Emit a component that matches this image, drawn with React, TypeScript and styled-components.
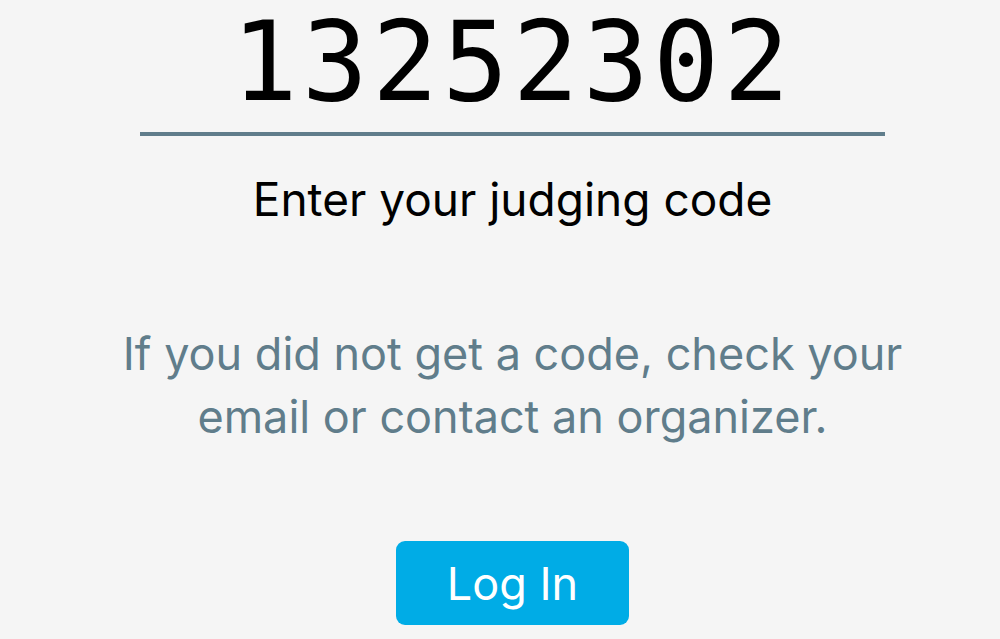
import React from 'react';
import styled, { createGlobalStyle } from 'styled-components';

const GlobalStyle = createGlobalStyle`
    html, body {
        margin: 0;
        padding: 0;
        background-color: #f5f5f5;
    }
    body {
        font-family: Inter, "Noto Sans", sans-serif;
    }
`;

const Page = styled.div`
    display: flex;
    flex-direction: column;
    align-items: center;
    box-sizing: border-box;
    width: 100%;
    min-height: 639px;
    padding-left: 25px;
    overflow: hidden;
`;

const CodeInput = styled.input`
    display: block;
    width: 745px;
    height: 136px;
    margin: 0;
    padding: 0 0 8px 0;
    border: none;
    border-bottom: 4px solid #607d8b;
    background: transparent;
    outline: none;
    box-sizing: border-box;
    text-align: center;
    font-family: "DejaVu Sans Mono", "Liberation Mono", monospace;
    font-size: 110px;
    line-height: 128px;
    letter-spacing: 4px;
    color: #000;
`;

const Label = styled.div`
    margin-top: 36px;
    font-size: 46px;
    line-height: 55px;
    color: #000;
`;

const Hint = styled.p`
    margin: 95px 0 0 0;
    max-width: 820px;
    text-align: center;
    font-size: 45px;
    line-height: 63px;
    color: #607d8b;
`;

const LoginButton = styled.button`
    margin-top: 93px;
    width: 233px;
    height: 84px;
    border: none;
    border-radius: 9px;
    background-color: #00ace6;
    color: #fff;
    font-family: Inter, "Noto Sans", sans-serif;
    font-size: 45px;
    cursor: pointer;
`;

const App: React.FC = () => {
    return (
        <React.Fragment>
            <GlobalStyle />
            <Page>
                <CodeInput defaultValue="13252302" />
                <Label>Enter your judging code</Label>
                <Hint>If you did not get a code, check your email or contact an organizer.</Hint>
                <LoginButton>Log In</LoginButton>
            </Page>
        </React.Fragment>
    );
};

export default App;
